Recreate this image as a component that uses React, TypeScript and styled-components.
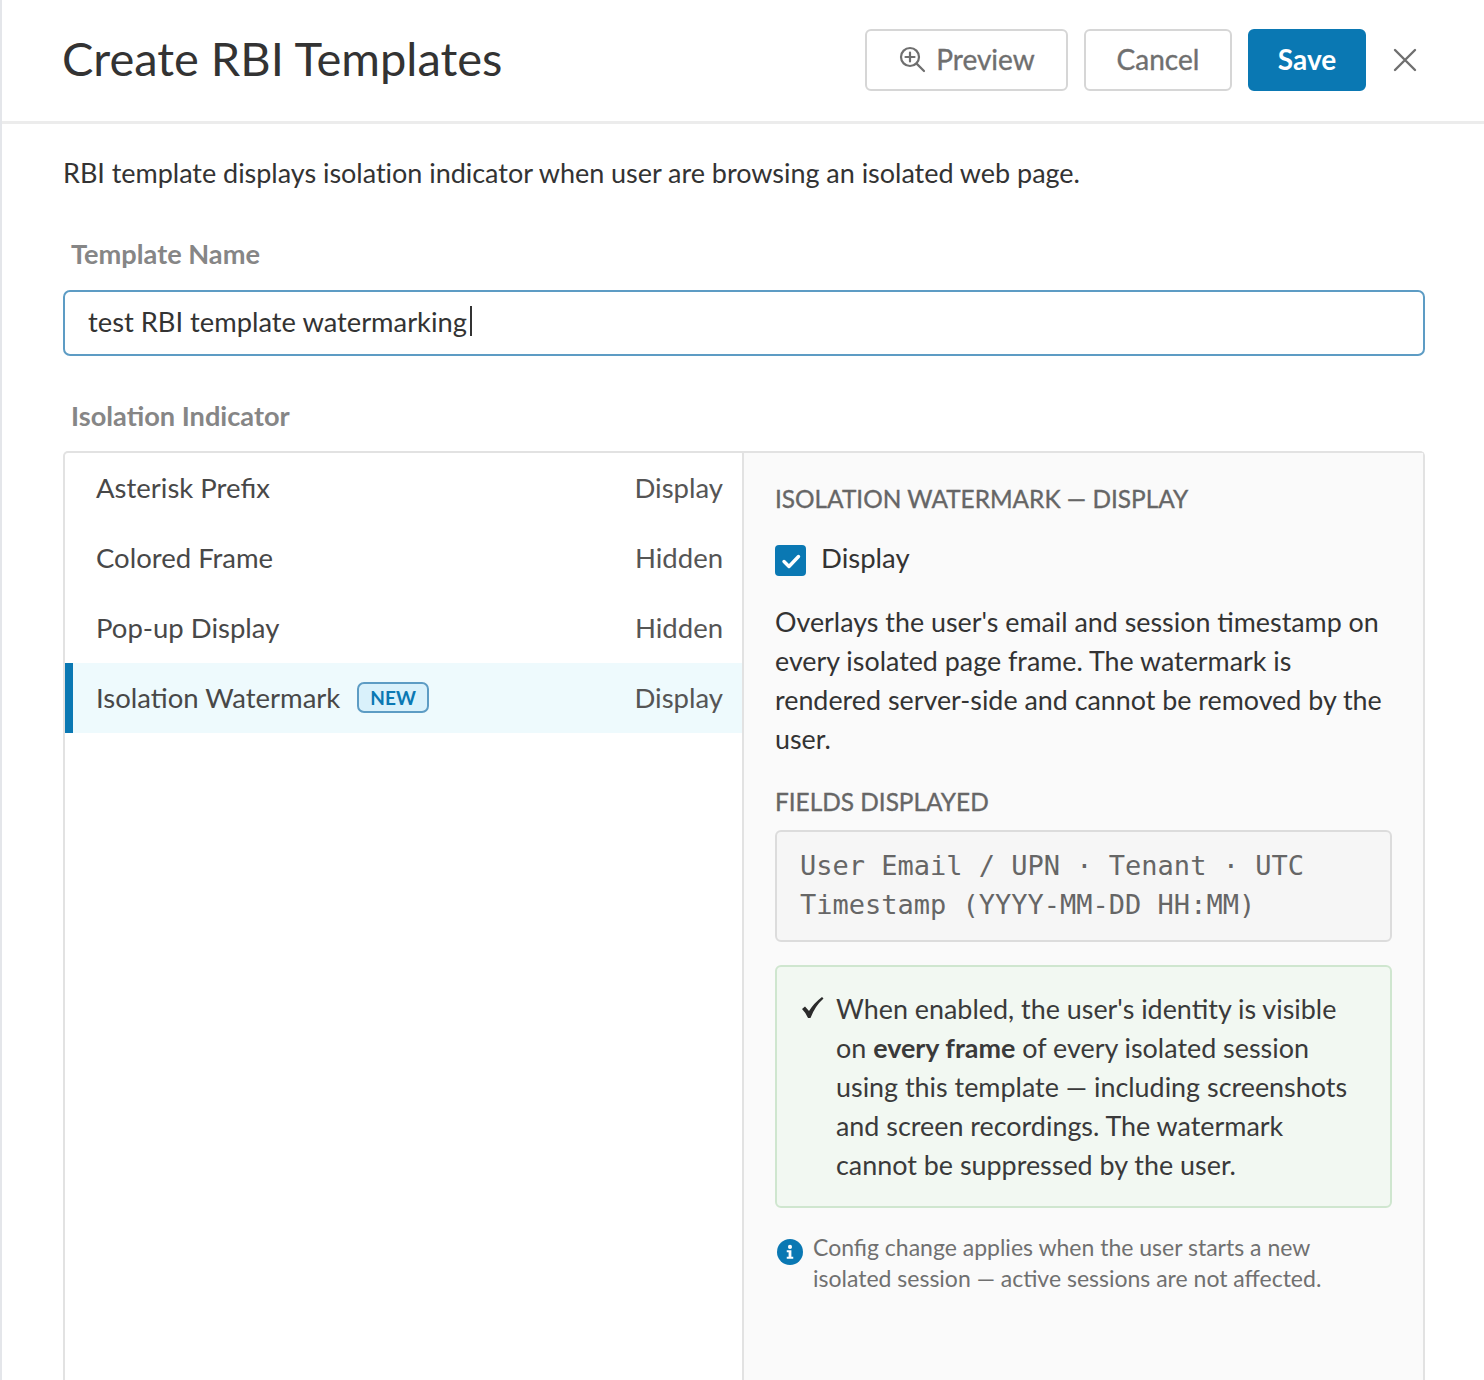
import React from "react";
import styled, { createGlobalStyle } from "styled-components";

const Global = createGlobalStyle`
  html, body { margin: 0; padding: 0; background: #fff; }
  body { font-family: Lato, "Open Sans", sans-serif; color: #333; }
`;

const Page = styled.div`
  width: 1484px;
  height: 1380px;
  overflow: hidden;
  box-sizing: border-box;
  border-left: 2px solid #e4e6ea;
  display: flex;
  flex-direction: column;
`;

const Header = styled.header`
  height: 124px;
  flex: none;
  box-sizing: border-box;
  border-bottom: 3px solid #ececec;
  display: flex;
  align-items: center;
  padding: 0 59px 1px 61px;
`;

const Title = styled.h1`
  margin: 0 0 4px -1px;
  flex: 1;
  font-size: 47px;
  font-weight: 400;
  color: #333;
`;

const Actions = styled.div`
  display: flex;
  align-items: center;
  gap: 16px;
`;

const Button = styled.button<{ $primary?: boolean; $w: number }>`
  width: ${(p) => p.$w}px;
  height: 62px;
  box-sizing: border-box;
  border-radius: 6px;
  border: 2px solid ${(p) => (p.$primary ? "#0a78b3" : "#d6d6d6")};
  background: ${(p) => (p.$primary ? "#0a78b3" : "#fff")};
  color: ${(p) => (p.$primary ? "#fff" : "#6f6f6f")};
  font: ${(p) => (p.$primary ? 700 : 400)} 28px Lato, sans-serif;
  -webkit-text-stroke: ${(p) => (p.$primary ? 0 : "0.35px")};
  display: flex;
  align-items: center;
  justify-content: center;
  gap: 10px;
  padding: 0 0 2px;
`;

const Close = styled.button`
  width: 40px;
  height: 40px;
  margin-left: 3px;
  border: 0;
  background: none;
  padding: 0;
  display: flex;
  align-items: center;
  justify-content: center;
`;

const Body = styled.main`
  flex: 1;
  min-height: 0;
  display: flex;
  flex-direction: column;
  padding: 0 59px 0 61px;
`;

const Intro = styled.p`
  margin: 29px 0 0;
  font-size: 27px;
  line-height: 39px;
  letter-spacing: -0.03px;
  color: #333;
`;

const Label = styled.div<{ $top: number }>`
  margin: ${(p) => p.$top}px 0 0 8px;
  font-size: 27.2px;
  line-height: 36px;
  font-weight: 700;
  color: #868686;
`;

const Field = styled.div`
  margin-top: 18px;
  height: 66px;
  box-sizing: border-box;
  border: 2px solid #5d9cc4;
  border-radius: 7px;
  padding: 0 23px 4px;
  display: flex;
  align-items: center;
  font-size: 27.3px;
  color: #333;
`;

const Caret = styled.span`
  display: inline-block;
  width: 2px;
  height: 30px;
  margin-left: 3px;
  background: #333;
`;

const Split = styled.div`
  margin-top: 17px;
  flex: 1;
  min-height: 0;
  display: grid;
  grid-template-columns: 677px 1fr;
  border: 2px solid #e2e2e2;
  border-bottom: 0;
  border-radius: 5px 5px 0 0;
`;

const List = styled.div`
  display: flex;
  flex-direction: column;
`;

const Row = styled.div<{ $active?: boolean }>`
  height: 70px;
  box-sizing: border-box;
  display: flex;
  align-items: center;
  padding: 0 19px 2px ${(p) => (p.$active ? 23 : 31)}px;
  border-left: ${(p) => (p.$active ? "8px solid #0a78b3" : "0")};
  background: ${(p) => (p.$active ? "#eefafd" : "transparent")};
  font-size: 27.5px;
  color: #484848;
`;

const RowName = styled.span`
  flex: 1;
  display: flex;
  align-items: center;
  gap: 17px;
`;

const RowState = styled.span`
  color: #555;
`;

const Badge = styled.span`
  height: 31px;
  box-sizing: border-box;
  padding: 0 11px;
  display: inline-flex;
  align-items: center;
  border: 2px solid #5d9cc4;
  border-radius: 7px;
  background: #d9f1fb;
  color: #0a78b3;
  font-size: 19px;
  font-weight: 700;
`;

const Detail = styled.section`
  background: #fafafa;
  border-left: 2px solid #e2e2e2;
  padding: 28px 31px 0 31px;
  display: flex;
  flex-direction: column;
`;

const Heading = styled.h2<{ $top?: number }>`
  margin: ${(p) => p.$top ?? 0}px 0 0;
  font-size: 24.4px;
  line-height: 36px;
  font-weight: 400;
  -webkit-text-stroke: 0.35px;
  color: #666;
`;

const CheckRow = styled.label`
  margin-top: 23px;
  display: flex;
  align-items: center;
  gap: 15px;
  font-size: 27.5px;
  line-height: 36px;
  color: #333;
`;

const CheckLabel = styled.span`
  margin-bottom: 5px;
`;

const CheckBox = styled.span`
  width: 31px;
  height: 31px;
  border-radius: 4px;
  background: #0a78b3;
  display: flex;
  align-items: center;
  justify-content: center;
`;

const Para = styled.p`
  margin: 21px 0 0;
  font-size: 26.85px;
  line-height: 39px;
  color: #333;
`;

const Mono = styled.div`
  margin-top: 10px;
  box-sizing: border-box;
  height: 112px;
  border: 2px solid #dcdcdc;
  border-radius: 6px;
  background: #f6f6f6;
  padding: 14px 23px;
  font-family: "DejaVu Sans Mono", "Liberation Mono", monospace;
  font-size: 27px;
  line-height: 39px;
  color: #666;
`;

const Notice = styled.div`
  margin-top: 23px;
  height: 243px;
  box-sizing: border-box;
  border: 2px solid #cfe6cf;
  border-radius: 6px;
  background: #f2f8f2;
  padding: 22px 30px 0 25px;
  display: flex;
  gap: 10px;
`;

const NoticeMark = styled.span`
  flex: none;
  width: 24px;
  padding-top: 8px;
`;

const NoticeText = styled.div`
  font-size: 26.9px;
  line-height: 39px;
  color: #3a3a3a;
  b { font-weight: 700; }
`;

const Note = styled.div`
  margin-top: 24px;
  display: flex;
  gap: 10px;
  font-size: 23px;
  line-height: 31px;
  color: #707070;
`;

const NoteIcon = styled.span`
  flex: none;
  margin: 7px 0 0 2px;
  width: 26px;
  height: 26px;
`;

const NoteText = styled.span`
  max-width: 530px;
`;

const CheckPath = () => (
  <svg width="24" height="24" viewBox="0 0 24 24" fill="none" aria-hidden>
    <path d="M5 12.5l5 5L19.5 7.5" stroke="#fff" strokeWidth="3.4" strokeLinecap="round" strokeLinejoin="round" />
  </svg>
);

const rows = [
  { name: "Asterisk Prefix", state: "Display" },
  { name: "Colored Frame", state: "Hidden" },
  { name: "Pop-up Display", state: "Hidden" },
  { name: "Isolation Watermark", state: "Display", active: true, badge: "NEW" },
];

export default function App() {
  return (
    <Page>
      <Global />
      <Header>
        <Title>Create RBI Templates</Title>
        <Actions>
          <Button $w={203}>
            <svg width="28" height="28" viewBox="0 0 28 28" fill="none" stroke="#6f6f6f" strokeWidth="2.2" strokeLinecap="round" aria-hidden>
              <circle cx="12" cy="12" r="9" />
              <path d="M12 7.5v9M7.5 12h9M18.6 18.6L26 26" />
            </svg>
            Preview
          </Button>
          <Button $w={148}>Cancel</Button>
          <Button $primary $w={118}>Save</Button>
          <Close aria-label="Close">
            <svg width="24" height="24" viewBox="0 0 24 24" fill="none" stroke="#6f6f6f" strokeWidth="2.4" strokeLinecap="round" aria-hidden>
              <path d="M2 2l20 20M22 2L2 22" />
            </svg>
          </Close>
        </Actions>
      </Header>
      <Body>
        <Intro>RBI template displays isolation indicator when user are browsing an isolated web page.</Intro>
        <Label $top={44}>Template Name</Label>
        <Field>test RBI template watermarking<Caret /></Field>
        <Label $top={42}>Isolation Indicator</Label>
        <Split>
          <List>
            {rows.map((r) => (
              <Row key={r.name} $active={r.active}>
                <RowName>
                  {r.name}
                  {r.badge && <Badge>{r.badge}</Badge>}
                </RowName>
                <RowState>{r.state}</RowState>
              </Row>
            ))}
          </List>
          <Detail>
            <Heading>ISOLATION WATERMARK — DISPLAY</Heading>
            <CheckRow>
              <CheckBox><CheckPath /></CheckBox>
              <CheckLabel>Display</CheckLabel>
            </CheckRow>
            <Para>
              Overlays the user's email and session timestamp on every isolated page frame. The watermark is rendered server-side and cannot be removed by the user.
            </Para>
            <Heading $top={26}>FIELDS DISPLAYED</Heading>
            <Mono>User Email / UPN · Tenant · UTC Timestamp (YYYY-MM-DD HH:MM)</Mono>
            <Notice>
              <NoticeMark>
                <svg width="22" height="22" viewBox="0 0 22 22" aria-hidden>
                  <path d="M0 12L3 9.5L7 14Q12 6 20 0L21.5 1.5Q13 9 8.5 21L6 21Q4 16 0 12Z" fill="#2b2b2b" />
                </svg>
              </NoticeMark>
              <NoticeText>
                When enabled, the user's identity is visible on <b>every frame</b> of every isolated session using this template — including screenshots and screen recordings. The watermark cannot be suppressed by the user.
              </NoticeText>
            </Notice>
            <Note>
              <NoteIcon>
                <svg width="26" height="26" viewBox="0 0 28 28" aria-hidden>
                  <circle cx="14" cy="14" r="14" fill="#0a78b3" />
                  <circle cx="14" cy="8.5" r="2.2" fill="#fff" />
                  <path d="M10.5 12h5v7h2v2.2h-7V19h2v-4.8h-2z" fill="#fff" />
                </svg>
              </NoteIcon>
              <NoteText>Config change applies when the user starts a new isolated session — active sessions are not affected.</NoteText>
            </Note>
          </Detail>
        </Split>
      </Body>
    </Page>
  );
}
